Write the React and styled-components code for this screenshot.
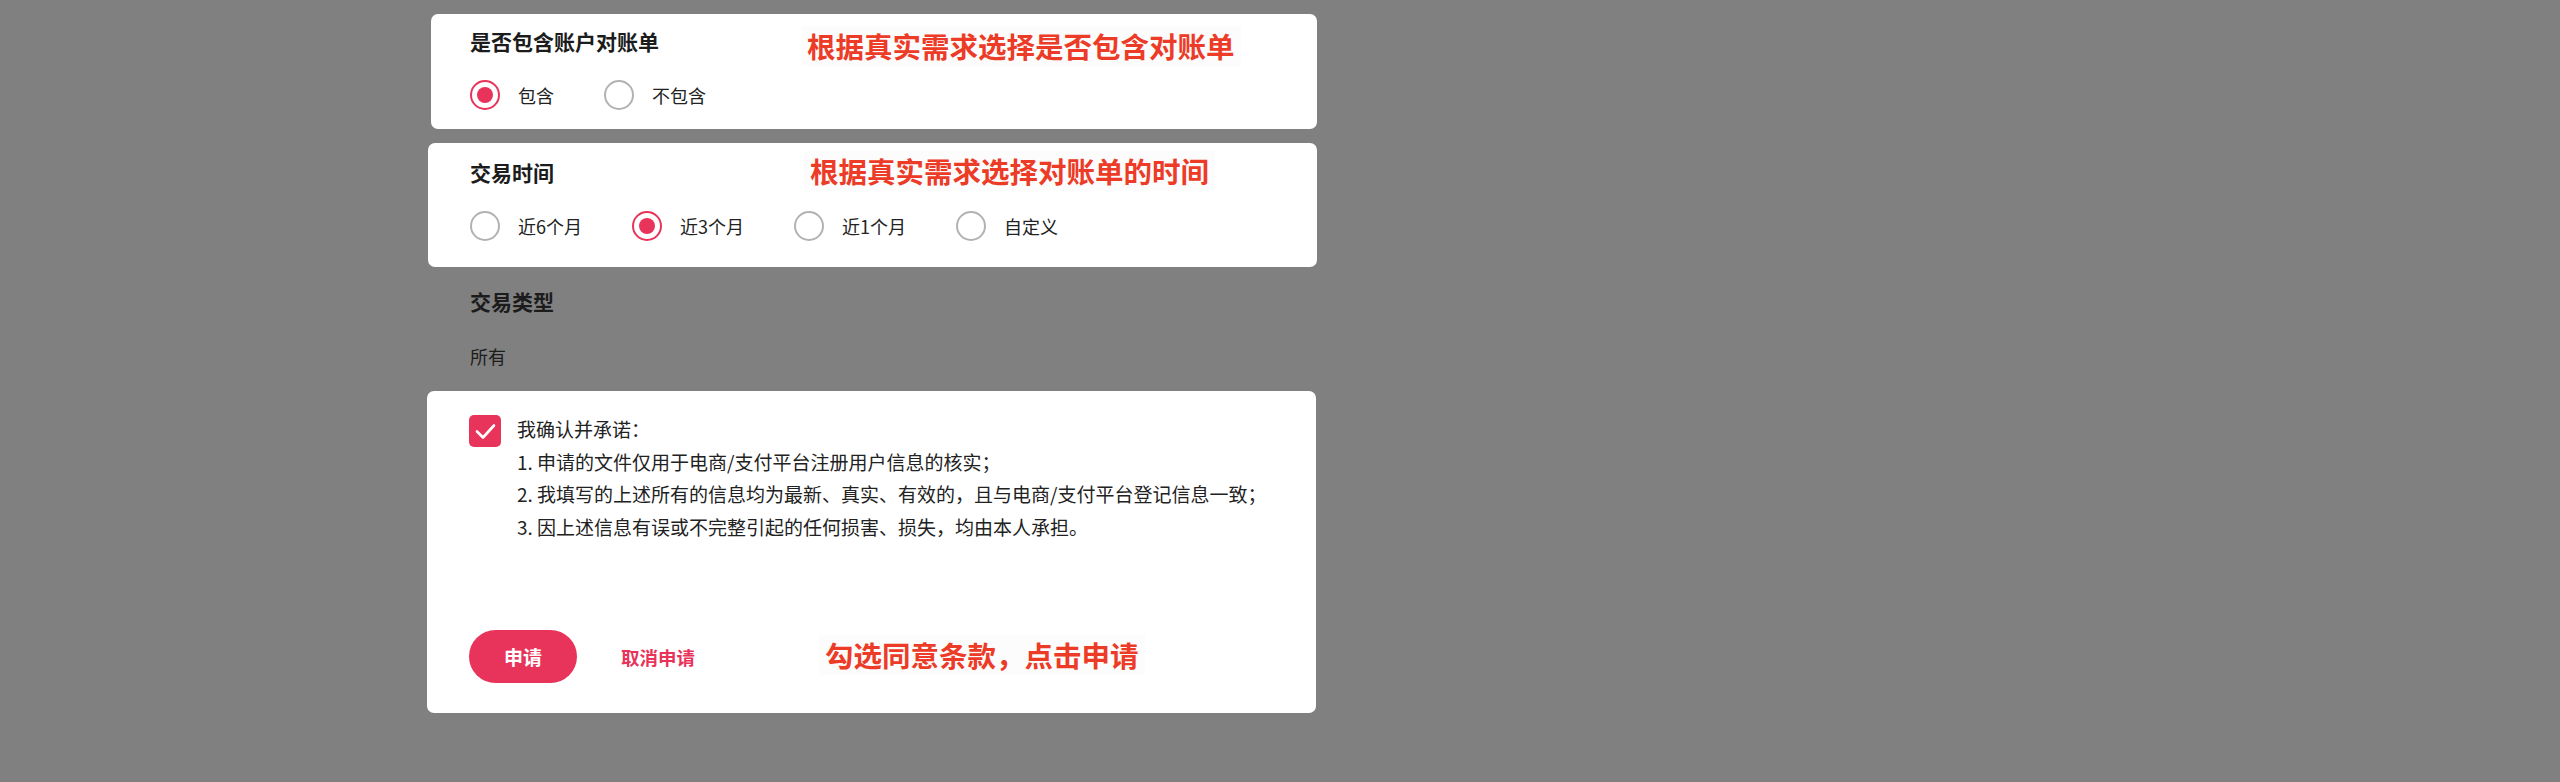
import React, { useState } from 'react';
import styled, { createGlobalStyle } from 'styled-components';

const GlobalStyle = createGlobalStyle`
	html, body {
		margin: 0;
		padding: 0;
		background: #808080;
	}
	body {
		font-family: 'Noto Sans CJK SC', 'Noto Sans', sans-serif;
		color: #222;
	}
`;

const PINK = '#e8345a';

function App() {
	const [withStatement, setWithStatement] = useState('yes');
	const [period, setPeriod] = useState('3m');
	const [agreed, setAgreed] = useState(true);

	return (
		<Page>
			<GlobalStyle />
			<Column>
				<Card $h={115} $shift={4} $pt={13}>
					<Title>是否包含账户对账单</Title>
					<RadioGroup>
						<Radio label='包含' checked={withStatement === 'yes'} onPick={() => setWithStatement('yes')} />
						<Radio label='不包含' checked={withStatement === 'no'} onPick={() => setWithStatement('no')} />
					</RadioGroup>
					<Annotation $top={12} $left={376}>根据真实需求选择是否包含对账单</Annotation>
				</Card>

				<Card $h={124} $shift={1} $pt={15}>
					<Title>交易时间</Title>
					<RadioGroup>
						<Radio label='近6个月' checked={period === '6m'} onPick={() => setPeriod('6m')} />
						<Radio label='近3个月' checked={period === '3m'} onPick={() => setPeriod('3m')} />
						<Radio label='近1个月' checked={period === '1m'} onPick={() => setPeriod('1m')} />
						<Radio label='自定义' checked={period === 'custom'} onPick={() => setPeriod('custom')} />
					</RadioGroup>
					<Annotation $top={8} $left={382}>根据真实需求选择对账单的时间</Annotation>
				</Card>

				<PlainSection>
					<Title>交易类型</Title>
					<Value>所有</Value>
				</PlainSection>

				<AgreementCard>
					<AgreeRow>
						<CheckBox $on={agreed} onClick={() => setAgreed(!agreed)}>
							{agreed && (
								<svg width='32' height='32' viewBox='0 0 32 32'>
									<path d='M8 16.5 L14 22.5 L25 10.5' fill='none' stroke='#fff' strokeWidth='2.6' strokeLinecap='round' strokeLinejoin='round' />
								</svg>
							)}
						</CheckBox>
						<Terms>
							<p>我确认并承诺：</p>
							<p>1. 申请的文件仅用于电商/支付平台注册用户信息的核实；</p>
							<p>2. 我填写的上述所有的信息均为最新、真实、有效的，且与电商/支付平台登记信息一致；</p>
							<p>3. 因上述信息有误或不完整引起的任何损害、损失，均由本人承担。</p>
						</Terms>
					</AgreeRow>
					<Actions>
						<SubmitButton>申请</SubmitButton>
						<CancelLink>取消申请</CancelLink>
					</Actions>
					<Annotation $top={244} $left={398}>勾选同意条款，点击申请</Annotation>
				</AgreementCard>
			</Column>
		</Page>
	);
}

function Radio({ label, checked, onPick }) {
	return (
		<RadioItem onClick={onPick}>
			<RadioCircle $checked={checked} />
			<RadioLabel>{label}</RadioLabel>
		</RadioItem>
	);
}

export default App;

const Page = styled.div`
	width: 2560px;
	height: 782px;
	padding: 14px 0 0 427px;
	box-sizing: border-box;
`;

const Column = styled.div`
	width: 890px;
	display: flex;
	flex-direction: column;
	gap: 14px;
`;

const Card = styled.div`
	position: relative;
	box-sizing: border-box;
	height: ${(p) => p.$h}px;
	margin-left: ${(p) => p.$shift}px;
	padding: ${(p) => p.$pt}px 0 0 ${(p) => 43 - p.$shift}px;
	background: #fff;
	border-radius: 7px;
	display: flex;
	flex-direction: column;
	gap: 24px;
`;

const Title = styled.h3`
	margin: 0;
	font-size: 21px;
	line-height: 29px;
	font-weight: 700;
	color: #1c1c1c;
`;

const RadioGroup = styled.div`
	display: flex;
	align-items: center;
	gap: 50px;
`;

const RadioItem = styled.label`
	display: flex;
	align-items: center;
	gap: 18px;
	cursor: pointer;
`;

const RadioCircle = styled.span`
	box-sizing: border-box;
	width: 30px;
	height: 30px;
	border-radius: 50%;
	border: 2.5px solid ${(p) => (p.$checked ? PINK : '#b2b2b2')};
	display: flex;
	align-items: center;
	justify-content: center;
	&::after {
		content: '';
		width: 16px;
		height: 16px;
		border-radius: 50%;
		background: ${(p) => (p.$checked ? PINK : 'transparent')};
	}
`;

const RadioLabel = styled.span`
	font-size: 18px;
	line-height: 26px;
	color: #222;
`;

const Annotation = styled.div`
	position: absolute;
	top: ${(p) => p.$top}px;
	left: ${(p) => p.$left}px;
	padding: 0 6px;
	margin-left: -6px;
	font-size: 28.5px;
	line-height: 40px;
	font-weight: 700;
	color: #ec3b27;
	background: #fcfcfc;
	white-space: nowrap;
`;

const PlainSection = styled.div`
	padding: 6px 0 8px 43px;
	display: flex;
	flex-direction: column;
	gap: 27px;
`;

const Value = styled.div`
	font-size: 18px;
	line-height: 26px;
	color: #1c1c1c;
`;

const AgreementCard = styled.div`
	position: relative;
	box-sizing: border-box;
	width: 889px;
	height: 322px;
	padding: 22px 0 30px 42px;
	background: #fff;
	border-radius: 7px;
	display: flex;
	flex-direction: column;
	justify-content: space-between;
`;

const AgreeRow = styled.div`
	display: flex;
	align-items: flex-start;
	gap: 16px;
`;

const CheckBox = styled.div`
	flex: none;
	width: 32px;
	height: 32px;
	margin-top: 2px;
	border-radius: 5px;
	background: ${(p) => (p.$on ? PINK : '#fff')};
	border: ${(p) => (p.$on ? 'none' : '2px solid #b2b2b2')};
	box-sizing: border-box;
	cursor: pointer;
	svg {
		display: block;
	}
`;

const Terms = styled.div`
	font-size: 19px;
	line-height: 32.5px;
	color: #222;
	p {
		margin: 0;
	}
`;

const Actions = styled.div`
	display: flex;
	align-items: center;
	gap: 44px;
`;

const SubmitButton = styled.button`
	width: 108px;
	height: 53px;
	border: none;
	border-radius: 27px;
	background: ${PINK};
	color: #fff;
	font-family: inherit;
	font-size: 19px;
	font-weight: 700;
	cursor: pointer;
`;

const CancelLink = styled.span`
	font-size: 18.5px;
	font-weight: 700;
	color: ${PINK};
	cursor: pointer;
`;
